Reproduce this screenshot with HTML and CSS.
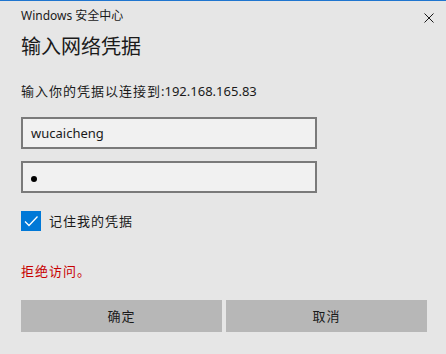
FILE: index.html
```html
<!DOCTYPE html>
<html lang="zh-CN">
<head>
    <meta charset="UTF-8">
    <title>Windows 安全中心</title>
    <link rel="stylesheet" href="styles.css">
</head>
<body>
    <div class="dialog">
        <div class="titlebar">
            <div class="app-name">Windows 安全中心</div>
            <div class="close-btn">
                <svg width="10" height="10" viewBox="0 0 10 10">
                    <path d="M0.5 0.5 L9.5 9.5 M9.5 0.5 L0.5 9.5" stroke="#1a1a1a" stroke-width="1" fill="none"/>
                </svg>
            </div>
        </div>
        <div class="content">
            <div class="heading">输入网络凭据</div>
            <div class="subtitle"><span class="cjk">输入你的凭据以连接到</span>:192.168.165.83</div>
            <div class="field">wucaicheng</div>
            <div class="field password"><span class="dot"></span></div>
            <div class="remember">
                <span class="checkbox">
                    <svg width="20" height="20" viewBox="0 0 20 20">
                        <path d="M4 10.5 L8 14.5 L16.5 5.5" stroke="#fff" stroke-width="1.3" fill="none"/>
                    </svg>
                </span>
                <span class="remember-text cjk">记住我的凭据</span>
            </div>
            <div class="error cjk">拒绝访问。</div>
            <div class="buttons">
                <div class="btn"><span class="cjk">确定</span></div>
                <div class="btn"><span class="cjk">取消</span></div>
            </div>
        </div>
    </div>
</body>
</html>
```

FILE: styles.css
```css
body {
    margin: 0;
    padding: 0;
    background: #e6e6e6;
    font-family: "Noto Sans", "Noto Sans CJK SC", sans-serif;
    color: #000;
}
.dialog {
    border-top: 1px solid #1f75cf;
    height: 353px;
}
.cjk {
    letter-spacing: 1px;
}
.titlebar {
    display: flex;
    justify-content: space-between;
    align-items: flex-start;
    height: 32px;
    padding: 0 12px 0 21px;
}
.app-name {
    font-size: 12px;
    line-height: 16px;
    padding-top: 7px;
    color: #1a1a1a;
}
.close-btn {
    padding-top: 12px;
}
.close-btn svg {
    display: block;
}
.content {
    padding: 0 19px 0 21px;
}
.heading {
    font-size: 20px;
    line-height: 28px;
    color: #1a1a1a;
}
.subtitle {
    font-size: 13px;
    line-height: 18px;
    margin-top: 21px;
    color: #1a1a1a;
}
.field {
    box-sizing: border-box;
    width: 296px;
    height: 32px;
    margin-top: 17px;
    border: 2px solid #7a7a7a;
    background: #f1f1f1;
    font-size: 13px;
    line-height: 28px;
    padding: 0 8px;
    color: #1a1a1a;
}
.field.password {
    margin-top: 12px;
    display: flex;
    align-items: center;
}
.dot {
    width: 6px;
    height: 6px;
    border-radius: 50%;
    background: #000;
    margin-top: 4px;
}
.remember {
    display: flex;
    align-items: center;
    gap: 8px;
    margin-top: 18px;
    height: 20px;
}
.checkbox {
    width: 20px;
    height: 20px;
    background: #0078d7;
    display: block;
}
.checkbox svg {
    display: block;
}
.remember-text {
    font-size: 13px;
    line-height: 18px;
    color: #1a1a1a;
}
.error {
    font-size: 13px;
    line-height: 18px;
    margin-top: 31px;
    color: #c80000;
}
.buttons {
    display: flex;
    gap: 4px;
    margin-top: 20px;
}
.btn {
    flex: 1;
    height: 32px;
    background: #b7b7b7;
    font-size: 13px;
    line-height: 32px;
    text-align: center;
    color: #1a1a1a;
}
```
